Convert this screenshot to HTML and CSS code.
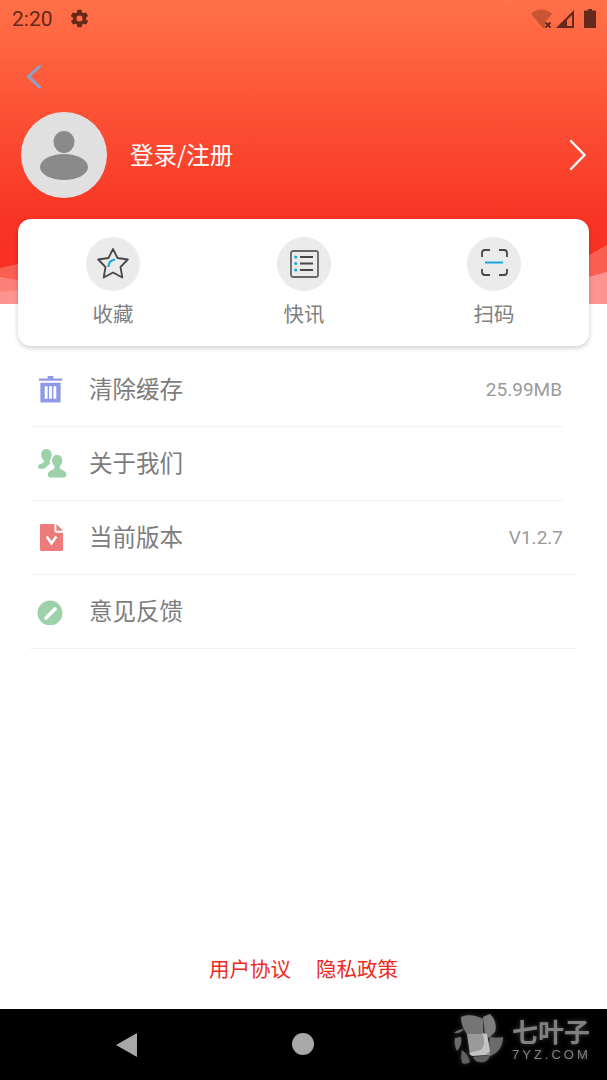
FILE: index.html
```html
<!DOCTYPE html>
<html>
<head>
    <meta charset="UTF-8">
    <title>我的</title>
    <link rel="stylesheet" href="styles.css">
</head>
<body>
    <div class="screen">
        <header class="hero">
            <svg class="waves" viewBox="0 0 607 304" preserveAspectRatio="none">
                <path d="M0 268 L18 264 L120 250 L500 250 L589 255 L607 245 L607 304 L0 304 Z" fill="#fa6052"/>
                <path d="M0 277 L18 280 L120 285 L500 285 L589 277 L607 272 L607 304 L0 304 Z" fill="#fd8078"/>
                <path d="M0 292 L18 290 L120 290 L500 290 L589 277 L607 272 L607 304 L0 304 Z" fill="#fd9490"/>
            </svg>
            <div class="status-bar">
                <span class="clock">2:20</span>
                <svg class="status-gear" viewBox="0 0 24 24"><path d="M19.4 13a7.6 7.6 0 0 0 0-2l2.100-1.600a.5.5 0 0 0 .1-.6l-2-3.500a.5.5 0 0 0-.6-.2l-2.500 1a7.400 7.400 0 0 0-1.700-1l-.4-2.600a.5.5 0 0 0-.5-.5h-4a.5.5 0 0 0-.5.5l-.4 2.600a7.400 7.400 0 0 0-1.700 1l-2.500-1a.5.5 0 0 0-.6.2l-2 3.500a.5.5 0 0 0 .1.6L4.600 11a7.600 7.600 0 0 0 0 2l-2.100 1.600a.5.5 0 0 0-.1.6l2 3.500a.5.5 0 0 0 .6.2l2.500-1a7.400 7.400 0 0 0 1.700 1l.4 2.600a.5.5 0 0 0 .5.5h4a.5.5 0 0 0 .5-.5l.4-2.600a7.400 7.400 0 0 0 1.700-1l2.500 1a.5.5 0 0 0 .6-.2l2-3.500a.5.5 0 0 0-.1-.6zM12 15.500a3.500 3.500 0 1 1 0-7 3.500 3.500 0 0 1 0 7z"/></svg>
                <span class="status-right">
                    <svg class="status-wifi" viewBox="0 0 22 20"><path d="M0 5 C5 -1 16 -1 21 5 L14 13 L14 19 L12 19 Z" opacity=".35"/><path d="M14.500 13.500l5 5m0-5l-5 5" stroke="#5f2a1a" stroke-width="1.800" fill="none"/></svg>
                    <svg class="status-signal" viewBox="0 0 18 18"><path fill-rule="evenodd" d="M18 0 L18 18 L0 18 Z M16 5 L11 10 L11 16 L16 16 Z"/></svg>
                    <svg class="status-battery" viewBox="0 0 12 19"><path d="M4 0h4v1.500h3a1 1 0 0 1 1 1V18a1 1 0 0 1-1 1H1a1 1 0 0 1-1-1V2.500a1 1 0 0 1 1-1h3z"/></svg>
                </span>
            </div>
            <div class="back-row">
                <svg class="back-arrow" viewBox="0 0 18 28"><path d="M15.500 4.500 L4.500 14.500 L15.500 25"/></svg>
            </div>
            <div class="user-row">
                <div class="avatar">
                    <svg viewBox="0 0 86 86"><ellipse cx="43" cy="30" rx="10.500" ry="11"/><ellipse cx="43" cy="55" rx="24" ry="13"/></svg>
                </div>
                <span class="login-text">登录/注册</span>
                <svg class="user-arrow" viewBox="0 0 18 32"><path d="M2 2 L15.500 16 L2 30"/></svg>
            </div>
        </header>

        <main class="content">
            <div class="quick-card">
                <div class="quick-item">
                    <div class="quick-circle">
                        <svg viewBox="0 0 34 34">
                            <path class="ink" d="M17 2 L21.500 11 L31.800 12.500 L24.500 20 L26.300 30.500 L17 25.500 L7.700 30.500 L9.500 20 L2.200 12.500 L12.500 11 Z"/>
                            <path class="blue" d="M12.500 20 C12.500 15.500 15 13 19 12.500"/>
                        </svg>
                    </div>
                    <span>收藏</span>
                </div>
                <div class="quick-item">
                    <div class="quick-circle">
                        <svg viewBox="0 0 34 34">
                            <rect class="ink thin" x="4" y="4" width="27" height="26" rx="2"/>
                            <path class="ink thick" d="M13 10H26M13 16.500H26M13 23H26"/>
                            <path class="blue dots" d="M8.700 10h.1M8.700 16.500h.1M8.700 23h.1"/>
                        </svg>
                    </div>
                    <span>快讯</span>
                </div>
                <div class="quick-item">
                    <div class="quick-circle">
                        <svg viewBox="0 0 34 34">
                            <path class="ink" d="M5 10V6a3 3 0 0 1 3-3h5M22 3h5a3 3 0 0 1 3 3v4M5 22v3a3 3 0 0 0 3 3h5M22 28h5a3 3 0 0 0 3-3v-3"/>
                            <path class="blue" d="M8 15.500H26"/>
                        </svg>
                    </div>
                    <span>扫码</span>
                </div>
            </div>

            <ul class="menu">
                <li class="menu-row short">
                    <svg class="menu-icon" viewBox="0 0 26 28"><path fill="#8f9ae6" d="M10 0h6v2.500H25V5H1V2.500h9zM2.500 7h21v19.500a1 1 0 0 1-1 1h-19a1 1 0 0 1-1-1zM7 10.500v13h3v-13zm4.500 0v13h3v-13zm4.500 0v13h3v-13z" fill-rule="evenodd"/></svg>
                    <span class="menu-label">清除缓存</span>
                    <span class="menu-value">25.99MB</span>
                </li>
                <li class="menu-row short">
                    <svg class="menu-icon people" viewBox="0 0 28 28"><path fill="#9dd1aa" d="M8 0c3.500 0 5.500 2.800 5.200 6.500-.2 2.200-1 3.800-2 4.800-.3 1 0 1.800.8 2.400L6 19H2c-1.500 0-2-.8-2-1.800 0-2.200 3-3 5-4 .8-.5 1-1 .8-1.900C4.500 10.300 3.500 8.700 3.200 6.500 2.800 2.800 4.800 0 8 0z"/><path fill="#9dd1aa" stroke="#fff" stroke-width="1.200" d="M18.500 5c3.700 0 6 3 5.500 7-.3 2.200-1.200 3.800-2.300 4.800-.3 1.200 0 2 1 2.500 2.500 1.100 5.300 2 5.300 5 0 2-1 3.700-3 3.700H12c-2 0-3-1.700-3-3.700 0-3 2.800-3.900 5.300-5 1-.5 1.300-1.300 1-2.500-1.100-1-2-2.600-2.300-4.800-.5-4 1.800-7 5.500-7z"/></svg>
                    <span class="menu-label">关于我们</span>
                </li>
                <li class="menu-row">
                    <svg class="menu-icon doc" viewBox="0 0 24 28"><path fill="#ec7b7b" d="M1.500 0H15v7a2 2 0 0 0 2 2h7v17.500a1.500 1.500 0 0 1-1.500 1.500h-21A1.500 1.500 0 0 1 0 26.500v-25A1.500 1.500 0 0 1 1.500 0zM17 0l7 7h-6a1 1 0 0 1-1-1z"/><path d="M7 13 L12 20 L17 13" fill="none" stroke="#fff" stroke-width="2.600"/></svg>
                    <span class="menu-label">当前版本</span>
                    <span class="menu-value">V1.2.7</span>
                </li>
                <li class="menu-row">
                    <svg class="menu-icon" viewBox="0 0 27 27"><circle cx="13" cy="15" r="12.500" fill="#9dd1aa"/><path d="M9 20 L18 11" stroke="#fff" stroke-width="3.600" stroke-linecap="round"/></svg>
                    <span class="menu-label">意见反馈</span>
                </li>
            </ul>
        </main>

        <div class="legal">
            <span>用户协议</span>
            <span>隐私政策</span>
        </div>

        <footer class="nav-bar">
            <svg class="nav-back" viewBox="0 0 22 24"><path d="M21 0 V24 L0 12 Z"/></svg>
            <span class="nav-home"></span>
            <div class="watermark">
                <svg class="watermark-logo" viewBox="0 0 52 52">
                    <path fill="#757575" d="M9 3 C15 0 24 1 31 5 L31 20 L15 20 C11 15 9 9 9 3 Z"/>
                    <path fill="#7d7d7d" d="M31 3 L38 0 C43 5 45 12 43 18 L37 24 L33 20 Z"/>
                    <path fill="#6a6a6a" d="M38 23 C42 24 47 24 51 23 C51 31 47 39 38 42 L36 42 Z"/>
                    <path fill="#606060" d="M21 43 L38 41 C37 46 33 49 28 48 C25 48 22 46 21 43 Z"/>
                    <path fill="#606060" d="M10 36 C14 39 17 43 18 48 C15 50 12 50 10 49 C9 45 9 40 10 36 Z"/>
                    <path fill="#6a6a6a" d="M3 24 L9 23 C10 28 8 34 5 37 C3 33 2 28 3 24 Z"/>
                    <path fill="#6a6a6a" d="M2 19 C5 16 9 15 12 15 C10 18 6 20 2 19 Z"/>
                    <path fill="#9a9a9a" d="M15 20 H35 L38 41 H18 Z"/>
                    <path fill="#c4c4c4" d="M30 19 L35 20 L38 37 L33 41 L20 42 L17 39 L29 36 C33 32 33 25 30 19 Z"/>
                </svg>
                <div class="watermark-text">
                    <span class="watermark-cn">七叶子</span>
                    <span class="watermark-en">7YZ.COM</span>
                </div>
            </div>
        </footer>
    </div>
</body>
</html>
```

FILE: styles.css
```css
* {
    box-sizing: border-box;
}

body {
    margin: 0;
    background: #fff;
    font-family: "Noto Sans CJK SC", "Roboto", sans-serif;
}

.screen {
    position: relative;
    width: 607px;
    height: 1080px;
    display: flex;
    flex-direction: column;
    overflow: hidden;
}

.hero {
    position: relative;
    height: 304px;
    flex-shrink: 0;
    padding: 0 20px 0 21px;
    background: linear-gradient(to bottom, #ff7148, #f83424 72%, #f92e20);
}

.waves {
    position: absolute;
    left: 0;
    top: 0;
    width: 607px;
    height: 304px;
}

.status-bar {
    position: relative;
    height: 37px;
    margin: 0 -9px 0 -9px;
    display: flex;
    align-items: center;
    color: #64291a;
}

.clock {
    font-family: Roboto, sans-serif;
    font-size: 21px;
}

.status-gear {
    width: 21px;
    height: 21px;
    margin-left: 16px;
    fill: #64291a;
}

.status-right {
    margin-left: auto;
    display: flex;
    align-items: center;
    gap: 7px;
}

.status-wifi {
    width: 22px;
    height: 20px;
    margin-right: -4px;
    fill: #64291a;
}

.status-signal {
    width: 18px;
    height: 18px;
    fill: #64291a;
}

.status-battery {
    width: 12px;
    height: 19px;
    margin-left: 3px;
    fill: #64291a;
}

.back-row {
    position: relative;
    height: 75px;
    padding: 25px 0 0 3px;
}

.back-arrow {
    display: block;
    width: 18px;
    height: 28px;
    fill: none;
    stroke: #8ba2cc;
    stroke-width: 3;
    stroke-linecap: round;
}

.user-row {
    position: relative;
    display: flex;
    align-items: center;
}

.avatar {
    width: 86px;
    height: 86px;
    border-radius: 50%;
    background: #e0e0e0;
}

.avatar svg {
    display: block;
    width: 86px;
    height: 86px;
    fill: #8a8a8a;
}

.login-text {
    margin: 0 0 2px 23px;
    color: #fff;
    font-size: 23.5px;
}

.user-arrow {
    width: 18px;
    height: 32px;
    margin-left: auto;
    fill: none;
    stroke: #fff;
    stroke-width: 2.400;
    stroke-linecap: round;
}

.content {
    position: relative;
    flex: 1;
}

.quick-card {
    position: absolute;
    left: 18px;
    top: -85px;
    width: 571px;
    height: 127px;
    display: grid;
    grid-template-columns: 190px 192px 188px;
    padding: 18px 0 0;
    background: #fff;
    border-radius: 13px;
    box-shadow: 0 2px 5px rgba(0, 0, 0, 0.2);
}

.quick-item {
    display: flex;
    flex-direction: column;
    align-items: center;
    color: #808080;
    font-size: 20.5px;
    line-height: 28px;
}

.quick-circle {
    width: 54px;
    height: 54px;
    margin-bottom: 8px;
    border-radius: 50%;
    background: #ebebeb;
    display: flex;
    align-items: center;
    justify-content: center;
}

.quick-circle svg {
    width: 34px;
    height: 34px;
    fill: none;
}

.ink {
    stroke: #484848;
    stroke-width: 1.800;
    stroke-linejoin: round;
}

.ink.thin {
    stroke: #666;
}

.ink.thick {
    stroke-width: 2.200;
}

.blue {
    stroke: #14a8dc;
    stroke-width: 2;
}

.blue.dots {
    stroke-width: 3;
    stroke-linecap: round;
}

.menu {
    list-style: none;
    margin: 0;
    padding: 49px 31px 0 30px;
}

.menu-row {
    height: 74px;
    display: flex;
    align-items: center;
    border-bottom: 1px solid #f2f2f2;
    margin-right: -1px;
}

.menu-row.short {
    margin-right: 13px;
}

.menu-icon {
    width: 27px;
    height: 27px;
    margin-left: 7px;
}

.menu-icon.people {
    width: 29px;
    height: 29px;
    margin: 0 -3px 0 8px;
}

.menu-icon.doc {
    margin-left: 8px;
    margin-right: -1px;
}

.menu-label {
    margin: 0 0 3px 25px;
    color: #7d7d7d;
    font-size: 23.5px;
}

.menu-value {
    margin-left: auto;
    margin-right: 14px;
    color: #9a9a9a;
    font-family: Roboto, sans-serif;
    font-size: 19px;
}

.menu-row.short .menu-value {
    margin-right: 1px;
}

.legal {
    display: flex;
    justify-content: center;
    gap: 25px;
    height: 55px;
    color: #ee2a22;
    font-size: 20.5px;
    line-height: 28px;
}

.nav-bar {
    position: relative;
    height: 71px;
    flex-shrink: 0;
    background: #000;
}

.nav-back {
    position: absolute;
    left: 116px;
    top: 24px;
    width: 22px;
    height: 24px;
    fill: #a8a8a8;
}

.nav-home {
    position: absolute;
    left: 292px;
    top: 24px;
    width: 22px;
    height: 22px;
    border-radius: 50%;
    background: #a8a8a8;
}

.watermark {
    position: absolute;
    left: 452px;
    top: 5px;
    display: flex;
    align-items: center;
    gap: 8px;
    filter: drop-shadow(0 0 2px rgba(255, 255, 255, 0.25));
}

.watermark-logo {
    width: 52px;
    height: 52px;
}

.watermark-text {
    display: flex;
    flex-direction: column;
    color: #808080;
}

.watermark-cn {
    font-size: 26px;
    line-height: 26px;
    font-weight: 700;
}

.watermark-en {
    margin-top: 4px;
    font-family: "Liberation Sans", sans-serif;
    font-size: 13px;
    line-height: 14px;
    letter-spacing: 3px;
}
```
